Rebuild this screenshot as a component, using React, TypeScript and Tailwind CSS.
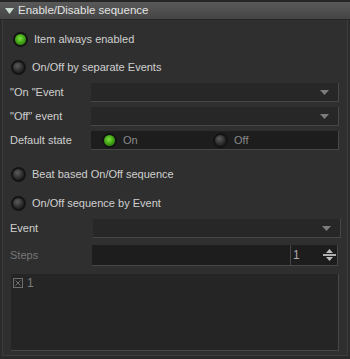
import React from 'react';

const font = { fontFamily: '"Liberation Sans", Arial, sans-serif' };

function Radio({ on }: { on?: boolean }) {
  return (
    <span
      className={
        'inline-block w-[15px] h-[15px] rounded-full border-2 border-[#141414] shrink-0 ' +
        (on
          ? 'bg-[radial-gradient(circle_at_45%_40%,#80e040_0%,#46aa18_45%,#1f5c0a_100%)]'
          : 'bg-[radial-gradient(circle_at_40%_35%,#5c5c5c_0%,#2c2c2c_55%,#131313_100%)]')
      }
    />
  );
}

function Arrow() {
  return (
    <svg width="9" height="5" viewBox="0 0 9 5" className="shrink-0">
      <path d="M0 0H9L4.5 5Z" fill="#7d7d7d" />
    </svg>
  );
}

function Dropdown({ className = '' }: { className?: string }) {
  return (
    <div
      className={
        'h-[19px] bg-[#272727] border-b border-r border-[#474747] flex items-center justify-end pr-[9px] ' +
        className
      }
    >
      <Arrow />
    </div>
  );
}

function Label({ children }: { children: React.ReactNode }) {
  return <span className="w-[81px] shrink-0">{children}</span>;
}

export default function App() {
  return (
    <div className="w-[350px] h-[359px] bg-[#2a2a2a] text-[11px] text-[#d0d0d0] flex flex-col" style={font}>
      <div className="h-[20px] border-t-2 border-b border-[#262626] bg-gradient-to-b from-[#595959] to-[#454545] flex items-center">
        <svg width="9" height="6" viewBox="0 0 9 6" className="ml-[5px] mr-[4px]">
          <path d="M0 0H9L4.5 6Z" fill="#c9dccf" />
        </svg>
        <span className="text-[#e4e4e4] text-[11.5px] leading-none">Enable/Disable sequence</span>
      </div>

      <div className="flex-1 mx-[2px] mb-[3px] border-l border-r border-b border-[#3d3d3d] bg-[#2f2f2f] flex flex-col">
        <div className="h-[20px] mt-[9px] flex items-center ml-[10px] gap-[6px]">
          <Radio on />
          <span>Item always enabled</span>
        </div>
        <div className="h-[20px] mt-[8px] flex items-center ml-[8px] gap-[6px]">
          <Radio />
          <span>On/Off by separate Events</span>
        </div>

        <div className="h-[19px] mt-[6px] flex items-center pl-[7px]">
          <Label>"On "Event</Label>
          <Dropdown className="w-[248px]" />
        </div>
        <div className="h-[19px] mt-[5px] flex items-center pl-[7px]">
          <Label>"Off" event</Label>
          <Dropdown className="w-[248px]" />
        </div>
        <div className="h-[19px] mt-[5px] flex items-center pl-[7px]">
          <Label>Default state</Label>
          <div className="w-[248px] h-[19px] bg-[#1d1d1d] border-b border-r border-[#474747] flex items-center">
            <span className="ml-[11px] flex items-center gap-[6px] w-[111px]">
              <Radio on />
              <span className="text-[#8a8a8a]">On</span>
            </span>
            <span className="flex items-center gap-[6px]">
              <Radio />
              <span className="text-[#8a8a8a]">Off</span>
            </span>
          </div>
        </div>

        <div className="h-[20px] mt-[14px] flex items-center ml-[8px] gap-[6px]">
          <Radio />
          <span>Beat based On/Off sequence</span>
        </div>
        <div className="h-[20px] mt-[9px] flex items-center ml-[8px] gap-[6px]">
          <Radio />
          <span>On/Off sequence by Event</span>
        </div>

        <div className="h-[19px] mt-[6px] flex items-center pl-[7px]">
          <span className="w-[83px] shrink-0">Event</span>
          <Dropdown className="w-[248px]" />
        </div>
        <div className="h-[21px] mt-[7px] flex items-center pl-[7px]">
          <span className="w-[82px] shrink-0 text-[#777]">Steps</span>
          <div className="w-[246px] h-[21px] bg-[#1d1d1d] border-b border-r border-[#474747] flex">
            <div className="w-[198px]" />
            <div className="flex-1 border-l border-[#474747] flex items-center justify-between pl-[2px] pr-[1px]">
              <span className="text-[#aaa] text-[12px]">1</span>
              <div className="flex flex-col items-center w-[13px]">
                <svg width="7" height="4" viewBox="0 0 7 4">
                  <path d="M0 4H7L3.5 0Z" fill="#bdbdbd" />
                </svg>
                <div className="w-[13px] h-[2px] bg-[#b0b0b0] my-[1px]" />
                <svg width="7" height="4" viewBox="0 0 7 4">
                  <path d="M0 0H7L3.5 4Z" fill="#bdbdbd" />
                </svg>
              </div>
            </div>
          </div>
        </div>

        <div className="h-[77px] mt-[8px] ml-[8px] w-[328px] bg-[#252525] border-b border-r border-[#474747] flex items-start pt-[4px] pl-[2px]">
          <svg width="10" height="10" viewBox="0 0 10 10">
            <rect x="0.5" y="0.5" width="9" height="9" fill="none" stroke="#6e6e6e" />
            <path d="M2.5 2.5L7.5 7.5M7.5 2.5L2.5 7.5" stroke="#6e6e6e" />
          </svg>
          <span className="ml-[4px] text-[#7a7a7a] text-[12px] leading-[10px]">1</span>
        </div>
      </div>
    </div>
  );
}
